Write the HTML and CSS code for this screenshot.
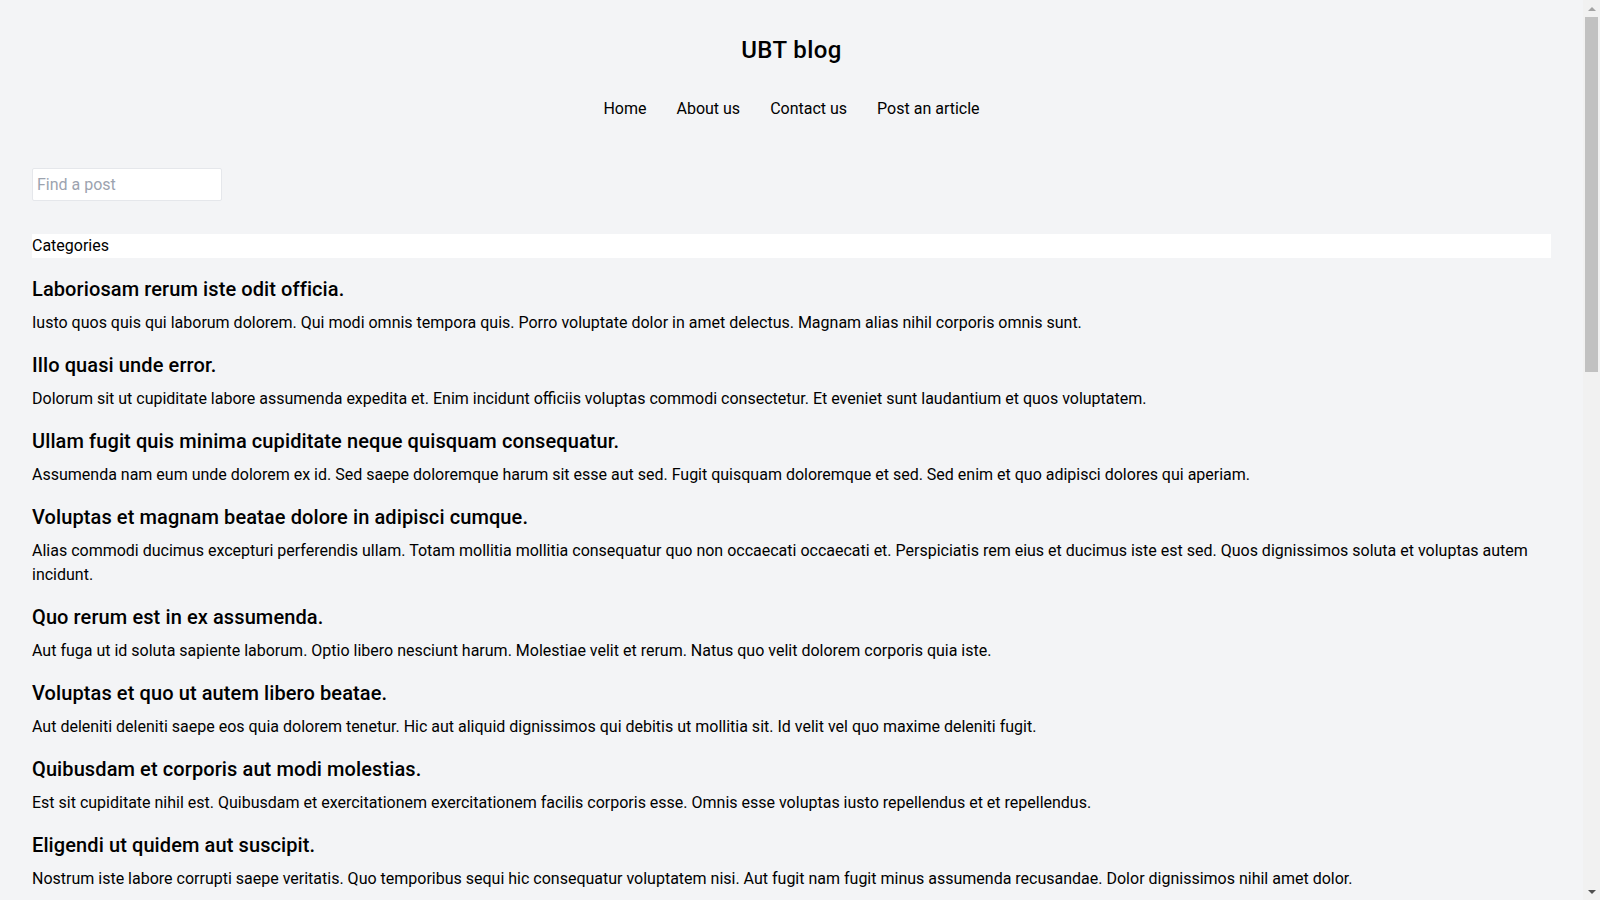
FILE: index.html
```html
<!DOCTYPE html>
<html lang="en">
<head>
<meta charset="utf-8">
<title>UBT blog</title>
<link rel="stylesheet" href="styles.css">
</head>
<body>
<div class="page">
<header class="site-header">
  <h1 class="site-title">UBT blog</h1>
  <nav class="site-nav">
    <a href="#" class="nav-link">Home</a>
    <a href="#" class="nav-link">About us</a>
    <a href="#" class="nav-link">Contact us</a>
    <a href="#" class="nav-link">Post an article</a>
  </nav>
</header>
<main class="content">
  <input class="search" type="text" placeholder="Find a post">
  <div class="categories">Categories</div>
  <section class="posts">
    <article class="post"><h2 class="post-title">Laboriosam rerum iste odit officia.</h2><p class="post-body">Iusto quos quis qui laborum dolorem. Qui modi omnis tempora quis. Porro voluptate dolor in amet delectus. Magnam alias nihil corporis omnis sunt.</p></article>
    <article class="post"><h2 class="post-title">Illo quasi unde error.</h2><p class="post-body">Dolorum sit ut cupiditate labore assumenda expedita et. Enim incidunt officiis voluptas commodi consectetur. Et eveniet sunt laudantium et quos voluptatem.</p></article>
    <article class="post"><h2 class="post-title">Ullam fugit quis minima cupiditate neque quisquam consequatur.</h2><p class="post-body">Assumenda nam eum unde dolorem ex id. Sed saepe doloremque harum sit esse aut sed. Fugit quisquam doloremque et sed. Sed enim et quo adipisci dolores qui aperiam.</p></article>
    <article class="post"><h2 class="post-title">Voluptas et magnam beatae dolore in adipisci cumque.</h2><p class="post-body">Alias commodi ducimus excepturi perferendis ullam. Totam mollitia mollitia consequatur quo non occaecati occaecati et. Perspiciatis rem eius et ducimus iste est sed. Quos dignissimos soluta et voluptas autem incidunt.</p></article>
    <article class="post"><h2 class="post-title">Quo rerum est in ex assumenda.</h2><p class="post-body">Aut fuga ut id soluta sapiente laborum. Optio libero nesciunt harum. Molestiae velit et rerum. Natus quo velit dolorem corporis quia iste.</p></article>
    <article class="post"><h2 class="post-title">Voluptas et quo ut autem libero beatae.</h2><p class="post-body">Aut deleniti deleniti saepe eos quia dolorem tenetur. Hic aut aliquid dignissimos qui debitis ut mollitia sit. Id velit vel quo maxime deleniti fugit.</p></article>
    <article class="post"><h2 class="post-title">Quibusdam et corporis aut modi molestias.</h2><p class="post-body">Est sit cupiditate nihil est. Quibusdam et exercitationem exercitationem facilis corporis esse. Omnis esse voluptas iusto repellendus et et repellendus.</p></article>
    <article class="post"><h2 class="post-title">Eligendi ut quidem aut suscipit.</h2><p class="post-body">Nostrum iste labore corrupti saepe veritatis. Quo temporibus sequi hic consequatur voluptatem nisi. Aut fugit nam fugit minus assumenda recusandae. Dolor dignissimos nihil amet dolor.</p></article>
    <article class="post"><h2 class="post-title">Sint qui voluptatem dolorum et.</h2><p class="post-body">Et voluptas sed quia est. Rerum dolorem molestiae eius aut quo. Voluptatem nam sit adipisci in reiciendis sapiente. Aliquam ut vel quis et harum.</p></article>
    <article class="post"><h2 class="post-title">Autem ipsa et aut dolores.</h2><p class="post-body">Nihil aut rem quibusdam quia. Est officia et corrupti odit. Doloremque omnis nemo magnam eligendi in quae. Qui velit accusamus consequatur ut.</p></article>
    <article class="post"><h2 class="post-title">Molestiae nobis inventore nulla nihil.</h2><p class="post-body">Ea ut similique architecto sunt. Sit sed ipsum fugiat praesentium. Enim id soluta vel ut minus. Dolorem corrupti doloribus provident ducimus ut omnis.</p></article>
    <article class="post"><h2 class="post-title">Tempore voluptatem quia cum.</h2><p class="post-body">Deserunt nihil eum iure aut. Dolores ratione voluptas velit nemo dolor. Labore odio velit repellat quae iusto est. Id accusantium aut et quibusdam.</p></article>
    <article class="post"><h2 class="post-title">Qui rerum ut dolore et sunt.</h2><p class="post-body">Odio fuga et delectus est. Cumque aut veniam minus quia adipisci sed. Provident et impedit libero non. Quaerat voluptas voluptatem omnis est error.</p></article>
    <article class="post"><h2 class="post-title">Nesciunt omnis ea quis iure.</h2><p class="post-body">Laudantium dolorum et nam sunt. Modi est consequatur reprehenderit quas. Optio ex quasi ut fugit voluptatem. Sed ea tenetur sunt ipsum.</p></article>
    <article class="post"><h2 class="post-title">Explicabo aut sed eius.</h2><p class="post-body">Aspernatur quis dolore earum nobis. Quia sit quis dolor fugiat sit. Ut numquam vero voluptas officiis tempora. Eum iusto ut ea quae.</p></article>
    <article class="post"><h2 class="post-title">Consequatur rerum sit officia.</h2><p class="post-body">Vero dignissimos veritatis quia ad. Amet modi sed ut vel aut. Et necessitatibus quo qui magnam voluptatem. Non et et et aut eius.</p></article>
    <article class="post"><h2 class="post-title">Velit repellendus aut occaecati.</h2><p class="post-body">Ipsam cupiditate ea veniam sed. Nemo facilis distinctio autem. Quia fugit quia rem esse. Illum deserunt et vel voluptates dolorem sint.</p></article>
    <article class="post"><h2 class="post-title">Ratione quam vitae sequi.</h2><p class="post-body">Itaque illo aut delectus voluptate. Quis praesentium laborum soluta aut. Magni aut ut quod. Maiores est consequatur rem optio dolores.</p></article>
    <article class="post"><h2 class="post-title">Et omnis aut ducimus.</h2><p class="post-body">Incidunt hic voluptas et ut. Sunt vitae deleniti vel sit. Numquam dolorem ut ad iste. Voluptate molestias totam eos et sint.</p></article>
    <article class="post"><h2 class="post-title">Dolor quisquam rerum quo.</h2><p class="post-body">Earum distinctio et aut. Accusamus sit et eius consequatur. Tenetur qui inventore sequi. Fuga quidem qui illo perspiciatis.</p></article>
    <article class="post"><h2 class="post-title">Perferendis ea expedita ut.</h2><p class="post-body">Natus est voluptas ut autem. Eveniet non in officiis. Voluptatem voluptatem alias et. Illum perferendis ea fugiat et.</p></article>
    <article class="post"><h2 class="post-title">Corporis ipsum ex commodi.</h2><p class="post-body">Aut rerum deleniti aspernatur. Unde earum quia voluptas ea. Officia ad adipisci dolorem. Nam non et iusto.</p></article>
  </section>
</main>
</div>
<div class="scrollbar" aria-hidden="true">
  <div class="scroll-btn"><span class="arrow-up"></span></div>
  <div class="scroll-track"><div class="scroll-thumb"></div></div>
  <div class="scroll-btn"><span class="arrow-down"></span></div>
</div>
</body>
</html>
```

FILE: styles.css
```css
html {
  background: #f3f4f6;
}

body {
  margin: 0;
  background: #f3f4f6;
  color: #000;
  font-family: Roboto, "Noto Sans", sans-serif;
  font-size: 16px;
  line-height: 24px;
}

.page {
  margin-right: 17px;
}

/* replica of the window scrollbar, drawn over the right edge */
.scrollbar {
  position: fixed;
  top: 0;
  right: 0;
  width: 17px;
  height: 100vh;
  background: #f1f1f1;
  display: flex;
  flex-direction: column;
}

.scroll-btn {
  height: 17px;
  flex: none;
  display: flex;
  align-items: center;
  justify-content: center;
}

.arrow-up {
  width: 0;
  height: 0;
  border-left: 4px solid transparent;
  border-right: 4px solid transparent;
  border-bottom: 4px solid #a3a3a3;
}

.arrow-down {
  width: 0;
  height: 0;
  border-left: 4px solid transparent;
  border-right: 4px solid transparent;
  border-top: 4px solid #505050;
}

.scroll-track {
  flex: 1;
}

.scroll-thumb {
  height: 355px;
  margin: 0 2px;
  background: #c1c1c1;
}

.site-header {
  padding-top: 34px;
  display: flex;
  flex-direction: column;
  align-items: center;
}

.site-title {
  margin: 0;
  font-size: 24px;
  line-height: 32px;
  font-weight: 500;
  letter-spacing: 0.4px;
}

.site-nav {
  margin-top: 31px;
  display: flex;
  gap: 30px;
}

.nav-link {
  color: #000;
  text-decoration: none;
  font-size: 16px;
  line-height: 24px;
}

.content {
  padding: 47px 32px 32px;
}

.search {
  display: block;
  box-sizing: border-box;
  width: 190px;
  height: 33px;
  margin: 0;
  padding: 0 4px;
  border: 1px solid #e5e7eb;
  border-radius: 2px;
  background: #fff;
  font-family: inherit;
  font-size: 16px;
  color: #000;
  outline: none;
}

.search::placeholder {
  color: #9ca3af;
}

.categories {
  margin-top: 33px;
  background: #fff;
  line-height: 24px;
}

.posts {
  margin-top: 17px;
}

.post-title {
  margin: 0;
  font-size: 20px;
  line-height: 28px;
  font-weight: 500;
  letter-spacing: 0.1px;
}

.post-body {
  margin: 8px 0 16px;
}
```
